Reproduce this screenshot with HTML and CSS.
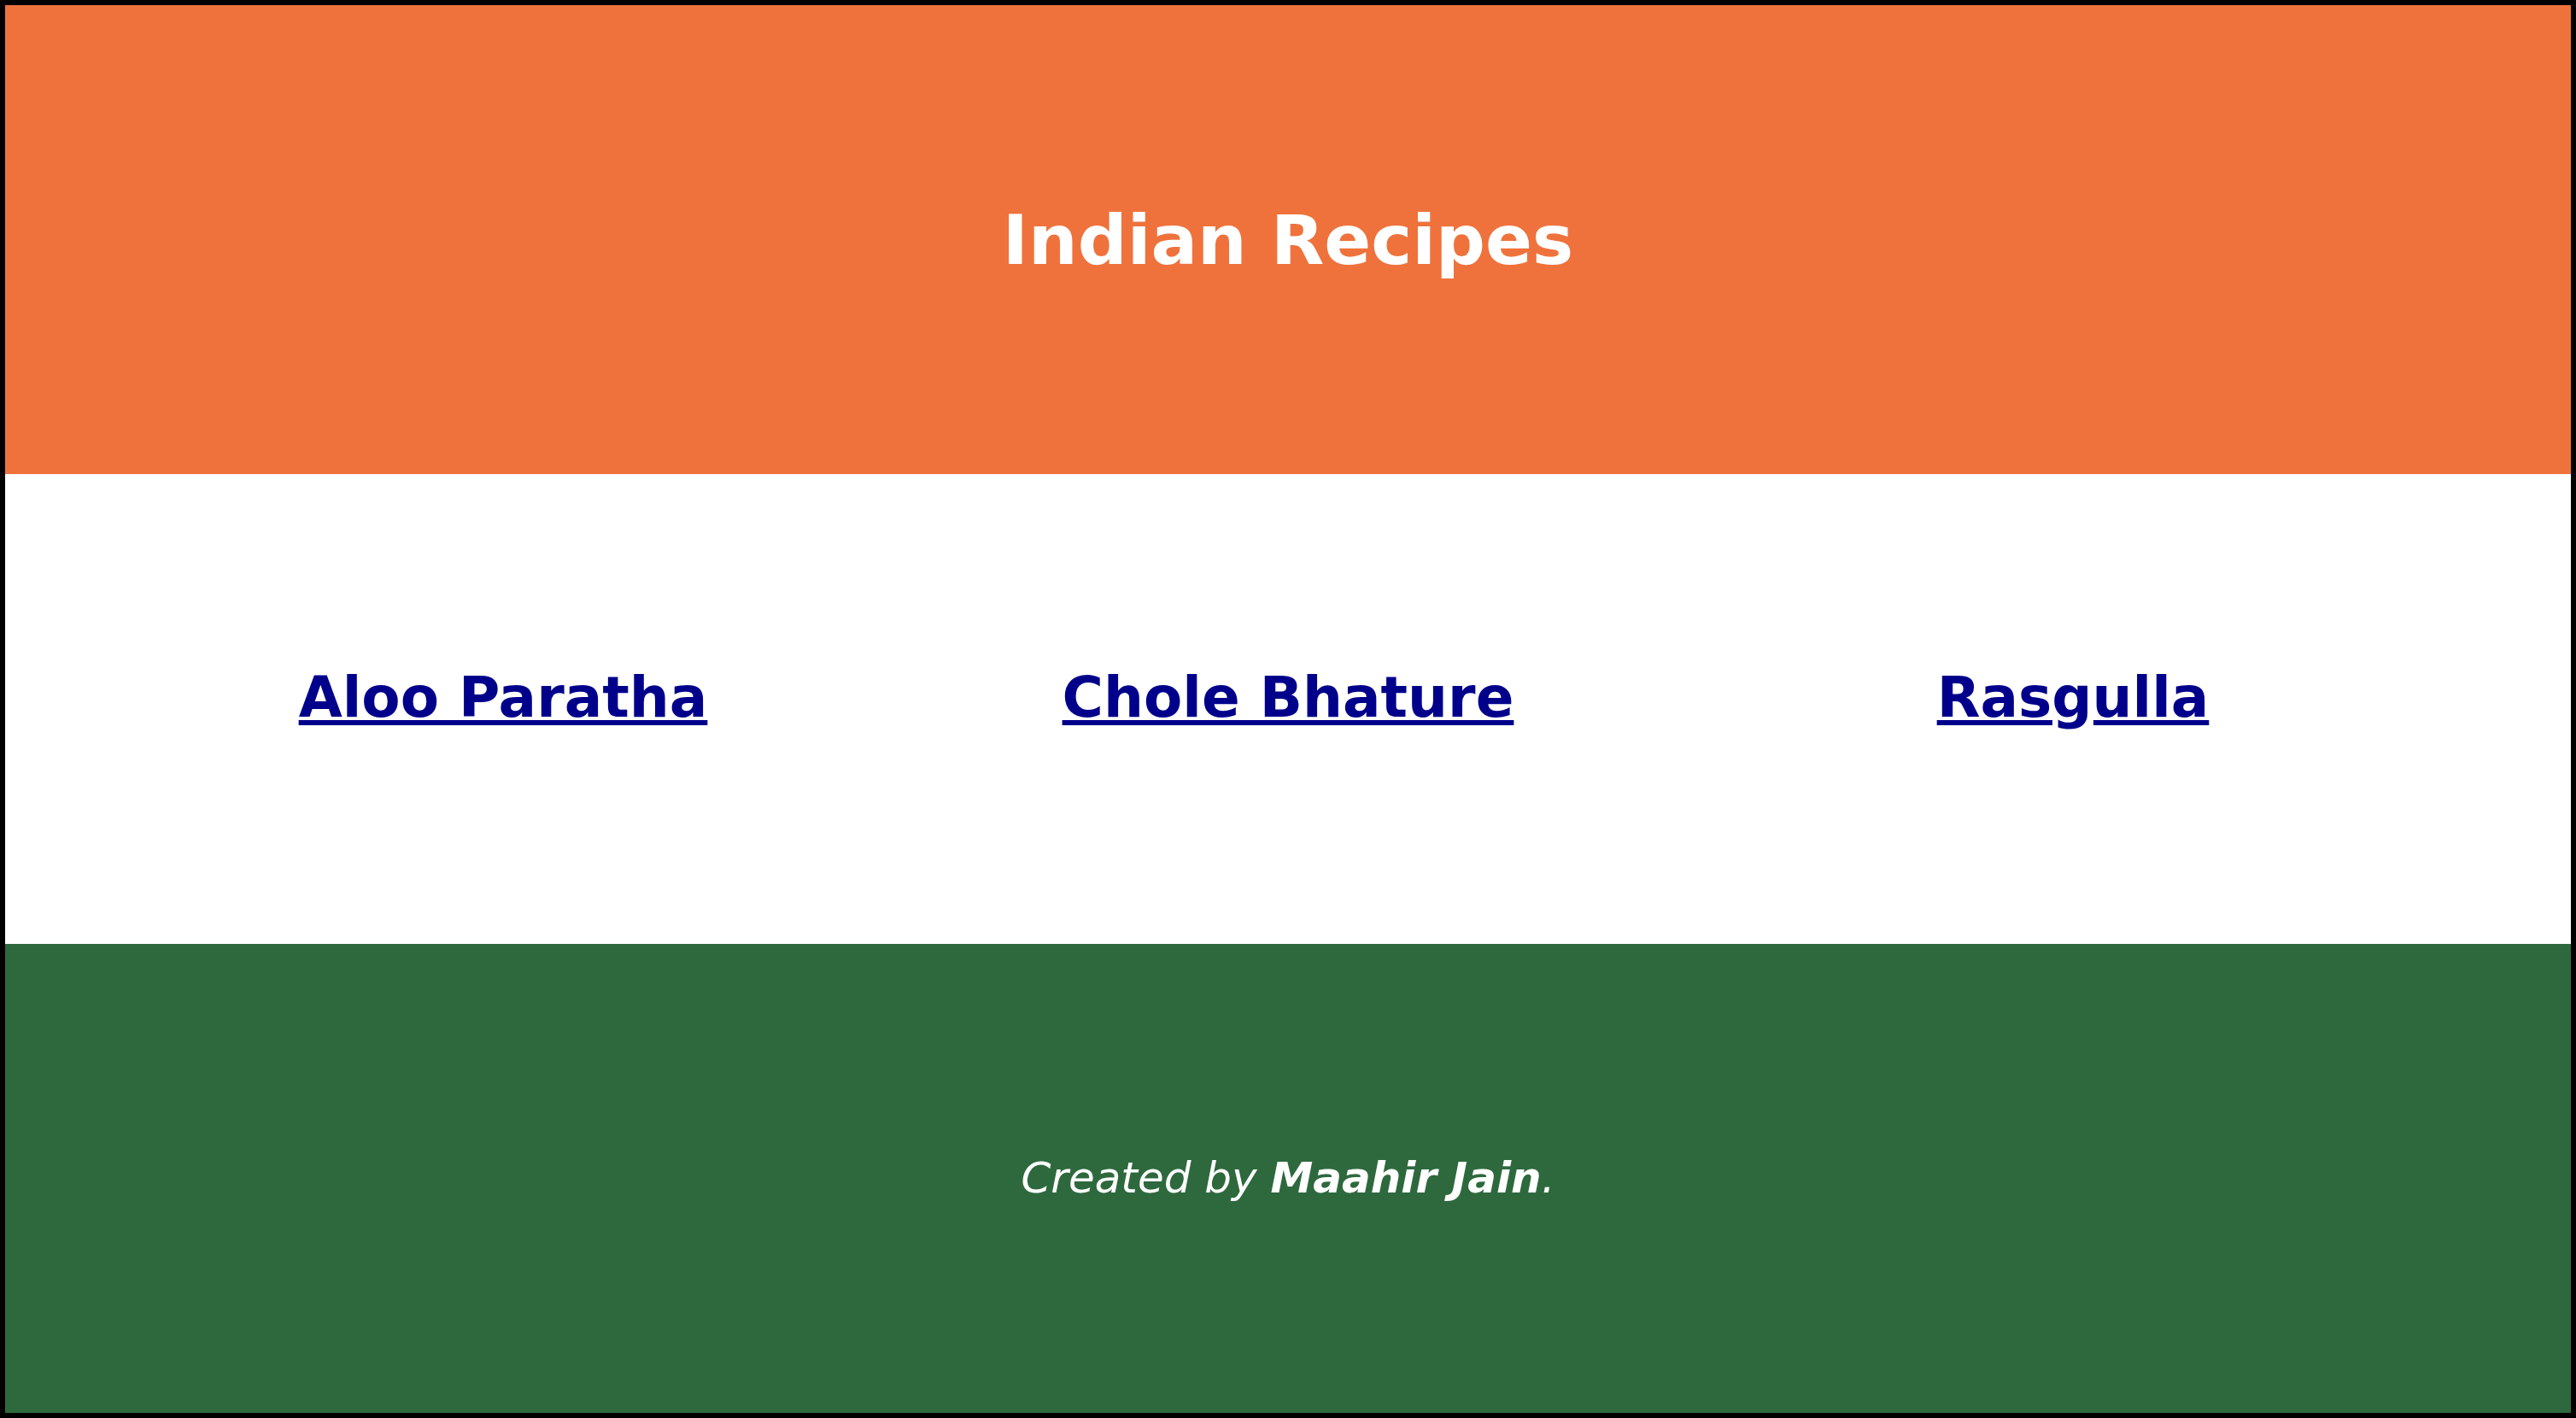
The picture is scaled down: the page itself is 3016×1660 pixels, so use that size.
FILE: index.html
```html
<!DOCTYPE html>
<html lang="en">
<head>
    <meta charset="UTF-8">
    <meta name="viewport" content="width=device-width, initial-scale=1.0">
    <title>Indian Recipes</title>
    <link rel="stylesheet" href="styles.css">
</head>
<body>

<div class="page">
    <header class="saffron">
        <h1>Indian Recipes</h1>
    </header>

    <div class="recipes">
        <a href="aloo-paratha.html">Aloo Paratha</a>
        <a href="chole-bhature.html">Chole Bhature</a>
        <a href="rasgulla.html">Rasgulla</a>
    </div>

    <footer class="green">
        <p>Created by <b>Maahir Jain</b>.</p>
    </footer>
</div>

</body>
</html>
```

FILE: styles.css
```css
html, body {
    margin: 0;
    padding: 0;
    height: 100%;
}
body {
    font-family: "DejaVu Sans", Verdana, sans-serif;
    background-color: #000;
}
.page {
    height: 100vh;
    box-sizing: border-box;
    border: 6px solid #000;
    display: grid;
    grid-template-rows: repeat(3, 1fr);
}
.page > * {
    display: flex;
    align-items: center;
    justify-content: center;
}
.saffron {
    background-color: #ef723c;
}
.saffron h1 {
    margin: 0;
    color: #fff;
    font-size: 81px;
    font-weight: bold;
}
.recipes {
    background-color: #fff;
    display: grid;
    grid-template-columns: repeat(3, 919px);
    justify-content: center;
    justify-items: center;
}
.recipes a {
    color: #00008b;
    font-size: 66px;
    font-weight: bold;
    text-decoration: underline;
    margin-bottom: 26px;
}
.green {
    background-color: #2e693e;
}
.green p {
    margin: 0;
    color: #fff;
    font-size: 50px;
    font-style: italic;
}
```
